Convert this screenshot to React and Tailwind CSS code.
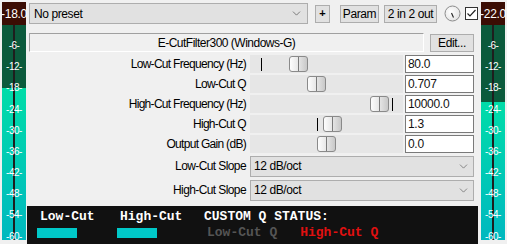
import { ChevronDown } from 'lucide-react'

const TICKS = [
  { t: '-6-', y: 46 },
  { t: '-12-', y: 67 },
  { t: '-18-', y: 88 },
  { t: '-24-', y: 110 },
  { t: '-30-', y: 131 },
  { t: '-36-', y: 152 },
  { t: '-42-', y: 173 },
  { t: '-48-', y: 194 },
  { t: '-54-', y: 215 },
  { t: '-60-', y: 237 },
]

const SLIDERS = [
  { label: 'Low-Cut Frequency (Hz)', value: '80.0', thumb: 39, tick: 11 },
  { label: 'Low-Cut Q', value: '0.707', thumb: 57 },
  { label: 'High-Cut Frequency (Hz)', value: '10000.0', thumb: 120, tick: 142 },
  { label: 'High-Cut Q', value: '1.3', thumb: 73, tick: 67 },
  { label: 'Output Gain (dB)', value: '0.0', thumb: 67 },
]

const SLOPES = [
  { label: 'Low-Cut Slope', value: '12 dB/oct' },
  { label: 'High-Cut Slope', value: '12 dB/oct' },
]

function Meter({ peak, split }) {
  return (
    <div className="relative w-[24px] h-[238px] mt-[2px] flex flex-col font-['Liberation_Sans',sans-serif]">
      <div className="h-[23px] bg-[#3b0d04] flex items-center justify-center text-white text-[12px] tracking-[-0.3px]">
        {peak}
      </div>
      <div className="bg-[#0b5a3c]" style={{ height: split - 25 }} />
      <div className="flex-1 bg-gradient-to-b from-[#00dca8] to-[#00b8bf]" />
      <div className="absolute left-[11px] top-[23px] bottom-0 w-[2px] bg-[#1e1e1e]" />
      {TICKS.map(k => (
        <div
          key={k.t}
          className="absolute left-0 w-[24px] text-center text-white text-[10px] leading-[12px] tracking-[-0.5px]"
          style={{ top: k.y - 8 }}
        >
          {k.t}
        </div>
      ))}
    </div>
  )
}

function Thumb({ left }) {
  return (
    <div
      className="absolute top-[1px] h-[16px] w-[19px] rounded-[3px] border border-[#8a8a8a] bg-gradient-to-r from-[#fdfdfd] via-[#e6e6e6] to-[#c8c8c8] flex justify-center"
      style={{ left }}
    >
      <div className="w-px h-full bg-[#7a7a7a]" />
    </div>
  )
}

export default function App() {
  return (
    <div className="w-[507px] h-[244px] overflow-hidden bg-[#f0f0f0] flex font-['Liberation_Sans',sans-serif] text-[12px] text-black">
      <div className="pl-[2px]">
        <Meter peak="-18.0" split={88} />
      </div>

      <div className="w-[450px] ml-[2px] flex flex-col">
        {/* top toolbar */}
        <div className="flex items-center mt-[3px] h-[21px] pl-[1px]">
          <div className="w-[279px] h-[21px] bg-[#e1e1e1] border border-[#adadad] flex items-center pl-[4px] pr-[4px] justify-between">
            <span className="tracking-[-0.4px]">No preset</span>
            <ChevronDown size={13} strokeWidth={1.2} className="text-[#444]" />
          </div>
          <div className="ml-[7px] w-[15px] h-[18px] bg-[#e1e1e1] border border-[#adadad] flex items-center justify-center text-[11px] font-bold">
            +
          </div>
          <div className="ml-[10px] w-[39px] h-[18px] bg-[#e1e1e1] border border-[#adadad] flex items-center justify-center tracking-[-0.4px]">
            Param
          </div>
          <div className="ml-[5px] w-[53px] h-[18px] bg-[#e1e1e1] border border-[#adadad] flex items-center justify-center tracking-[-0.4px]">
            2 in 2 out
          </div>
          <svg width="17" height="17" viewBox="0 0 17 17" className="ml-[7px]">
            <defs>
              <radialGradient id="kn" cx="0.4" cy="0.4" r="0.7">
                <stop offset="0" stopColor="#ffffff" />
                <stop offset="1" stopColor="#e0e0e0" />
              </radialGradient>
            </defs>
            <circle cx="8.5" cy="8.5" r="7.5" fill="url(#kn)" stroke="#8c8c8c" strokeWidth="1" />
            <line x1="7.5" y1="8" x2="9.5" y2="12.5" stroke="#222" strokeWidth="1.1" />
          </svg>
          <svg width="13" height="13" viewBox="0 0 13 13" className="ml-[4px]">
            <rect x="0.5" y="0.5" width="12" height="12" fill="#fff" stroke="#333" />
            <path d="M2.5 6.5 L5 9 L10.5 3" fill="none" stroke="#222" strokeWidth="1.2" />
          </svg>
        </div>

        {/* title row */}
        <div className="flex items-center mt-[9px] pl-[1px]">
          <div className="w-[395px] h-[19px] border-t border-l border-[#a0a0a0] border-b border-r border-b-white border-r-white flex items-center justify-center tracking-[-0.5px]">
            E-CutFilter300 (Windows-G)
          </div>
          <div className="ml-[6px] w-[44px] h-[18px] bg-[#e1e1e1] border border-[#adadad] flex items-center justify-center tracking-[-0.4px]">
            Edit...
          </div>
        </div>

        {/* sliders */}
        <div className="flex flex-col gap-[2px] mt-[3px]">
          {SLIDERS.map(s => (
            <div key={s.label} className="flex items-center h-[18px]">
              <div className="w-[222px] text-right tracking-[-0.7px] pr-[4px]">{s.label}</div>
              <div className="relative w-[153px] h-[18px] bg-[#e6e6e6]">
                {s.tick !== undefined && (
                  <div className="absolute top-[3px] w-px h-[13px] bg-black" style={{ left: s.tick }} />
                )}
                <Thumb left={s.thumb} />
              </div>
              <div className="ml-[2px] w-[69px] h-[18px] bg-white border border-[#7a7a7a] flex items-center pl-[2px] tracking-[-0.3px] text-[#111]">
                {s.value}
              </div>
            </div>
          ))}
        </div>

        {/* slopes */}
        <div className="flex flex-col gap-[2px] mt-[2px]">
          {SLOPES.map(s => (
            <div key={s.label} className="flex items-center h-[22px]">
              <div className="w-[222px] text-right tracking-[-0.6px] pr-[4px]">{s.label}</div>
              <div className="w-[224px] h-[21px] bg-[#e1e1e1] border border-[#adadad] flex items-center justify-between pl-[3px] pr-[3px]">
                <span className="tracking-[-0.4px]">{s.value}</span>
                <ChevronDown size={13} strokeWidth={1.2} className="text-[#555]" />
              </div>
            </div>
          ))}
        </div>

        {/* status panel */}
        <div className="mt-[5px] -ml-[1px] w-[451px] flex-1 bg-[#111111] font-['Liberation_Mono',monospace] font-bold text-[13px] leading-[14px] pl-[10px] pt-[4px]">
          <div className="flex">
            <span className="text-white w-[80px] pl-[3px]">Low-Cut</span>
            <span className="text-white w-[87px] pl-[3px]">High-Cut</span>
            <span className="text-white">CUSTOM Q STATUS:</span>
          </div>
          <div className="flex items-center mt-[2px]">
            <div className="w-[40px] h-[10px] bg-[#00c8c8]" />
            <div className="w-[40px] h-[10px] bg-[#00c8c8] ml-[40px]" />
            <span className="text-[#555555] ml-[50px]">Low-Cut Q</span>
            <span className="text-[#e01010] ml-[23px]">High-Cut Q</span>
          </div>
        </div>
      </div>

      <div className="ml-[3px]">
        <Meter peak="-22.0" split={102} />
      </div>
    </div>
  )
}
